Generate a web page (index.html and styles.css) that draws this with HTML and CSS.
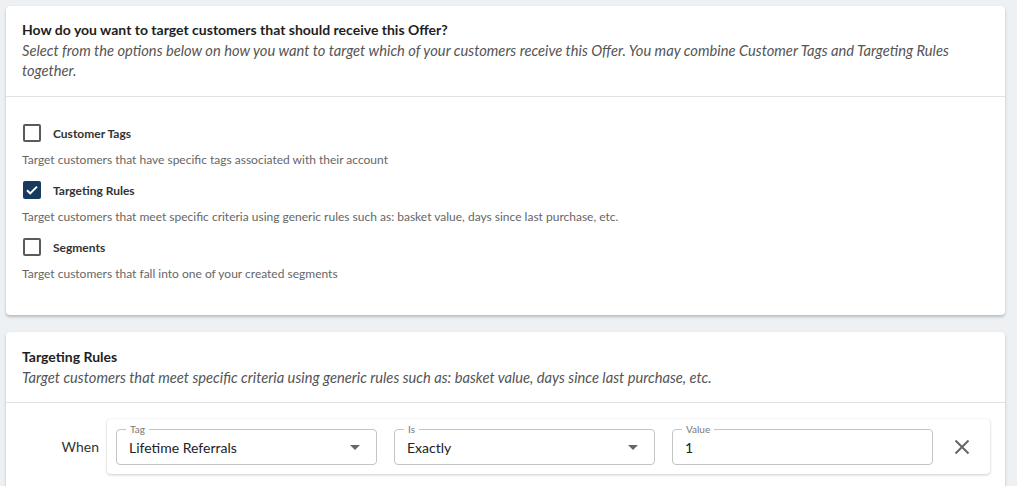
FILE: index.html
```html
<!DOCTYPE html>
<html lang="en">
<head>
    <meta charset="UTF-8">
    <meta name="viewport" content="width=device-width, initial-scale=1.0">
    <title>Offer Targeting</title>
    <link rel="stylesheet" href="styles.css">
</head>
<body>

<div class="page">
    <div class="card">
        <div class="card-header">
            <h2>How do you want to target customers that should receive this Offer?</h2>
            <p>Select from the options below on how you want to target which of your customers receive this Offer. You may combine Customer Tags and Targeting Rules together.</p>
        </div>
        <div class="card-body options">
            <div class="option">
                <label class="option-row">
                    <span class="checkbox"></span>
                    <span class="option-label">Customer Tags</span>
                </label>
                <div class="option-desc">Target customers that have specific tags associated with their account</div>
            </div>
            <div class="option">
                <label class="option-row">
                    <span class="checkbox checked">
                        <svg viewBox="0 0 18 18" width="18" height="18"><path d="M4 9.2l3.2 3.2L14 5.6" fill="none" stroke="#fff" stroke-width="2"/></svg>
                    </span>
                    <span class="option-label">Targeting Rules</span>
                </label>
                <div class="option-desc">Target customers that meet specific criteria using generic rules such as: basket value, days since last purchase, etc.</div>
            </div>
            <div class="option">
                <label class="option-row">
                    <span class="checkbox"></span>
                    <span class="option-label">Segments</span>
                </label>
                <div class="option-desc">Target customers that fall into one of your created segments</div>
            </div>
        </div>
    </div>

    <div class="card">
        <div class="card-header small">
            <h2>Targeting Rules</h2>
            <p>Target customers that meet specific criteria using generic rules such as: basket value, days since last purchase, etc.</p>
        </div>
        <div class="card-body rules">
            <div class="rule-line">
                <div class="rule-word">When</div>
                <div class="rule-card">
                    <div class="field">
                        <span class="field-label">Tag</span>
                        <span class="field-value">Lifetime Referrals</span>
                        <span class="caret"></span>
                    </div>
                    <div class="field">
                        <span class="field-label">Is</span>
                        <span class="field-value">Exactly</span>
                        <span class="caret"></span>
                    </div>
                    <div class="field">
                        <span class="field-label">Value</span>
                        <span class="field-value">1</span>
                    </div>
                    <button class="remove">
                        <svg viewBox="0 0 24 24" width="24" height="24"><path d="M5.5 5.5l13 13M18.5 5.5l-13 13" stroke="#666" stroke-width="2" fill="none"/></svg>
                    </button>
                </div>
            </div>
        </div>
    </div>
</div>

</body>
</html>
```

FILE: styles.css
```css
body {
    margin: 0;
    background: #eef1f4;
    font-family: Lato, "Open Sans", Arial, sans-serif;
    color: #222;
}

.page {
    padding: 6px 12px 0 6px;
    display: flex;
    flex-direction: column;
    gap: 17px;
}

.card {
    background: #fff;
    border-radius: 4px;
    box-shadow: 0 2px 3px rgba(0, 0, 0, 0.22), 0 0 1px rgba(0, 0, 0, 0.08);
}

.card-header {
    padding: 14px 16px 16px;
    border-bottom: 1px solid #e2e2e2;
}

.card-header.small {
    padding: 15px 16px 15px;
}

.card-header h2 {
    margin: 0;
    font-size: 14px;
    line-height: 20px;
    font-weight: bold;
    color: #1e1e1e;
}

.card-header p {
    margin: 0;
    font-size: 14.7px;
    line-height: 20px;
    font-style: italic;
    color: #555;
}

.options {
    padding: 22px 16px 32px;
    display: flex;
    flex-direction: column;
    gap: 7px;
}

.option {
    display: flex;
    flex-direction: column;
    gap: 4px;
}

.option-row {
    display: flex;
    align-items: center;
    height: 28px;
    padding-left: 1px;
}

.checkbox {
    width: 18px;
    height: 18px;
    box-sizing: border-box;
    border: 2px solid #5a5a5a;
    border-radius: 2px;
    margin-right: 12px;
    display: flex;
}

.checkbox.checked {
    border: none;
    background: #173a5e;
}

.option-label {
    font-size: 12px;
    font-weight: bold;
    color: #333;
}

.option-desc {
    font-size: 12px;
    line-height: 18px;
    color: #666;
}

.rules {
    padding: 16px 15px 30px 16px;
}

.rule-line {
    display: flex;
    align-items: center;
}

.rule-word {
    width: 77px;
    padding-right: 8px;
    text-align: right;
    font-size: 14px;
    color: #333;
}

.rule-card {
    flex: 1;
    display: flex;
    align-items: center;
    gap: 17px;
    padding: 10px 16px 9px 9px;
    border-radius: 4px;
    box-shadow: 0 1px 3px rgba(0, 0, 0, 0.2), 0 0 1px rgba(0, 0, 0, 0.1);
}

.field {
    flex: 1;
    position: relative;
    height: 36px;
    box-sizing: border-box;
    border: 1px solid #c4c4c4;
    border-radius: 4px;
    display: flex;
    align-items: center;
    padding: 0 16px 0 12px;
}

.field-label {
    position: absolute;
    top: -7px;
    left: 9px;
    padding: 0 4px;
    background: #fff;
    font-size: 10px;
    line-height: 12px;
    color: #777;
}

.field-value {
    flex: 1;
    font-size: 14px;
    color: #222;
}

.caret {
    width: 0;
    height: 0;
    border-left: 5px solid transparent;
    border-right: 5px solid transparent;
    border-top: 5px solid #666;
}

.remove {
    width: 24px;
    height: 24px;
    padding: 0;
    border: none;
    background: none;
    display: flex;
}
```
